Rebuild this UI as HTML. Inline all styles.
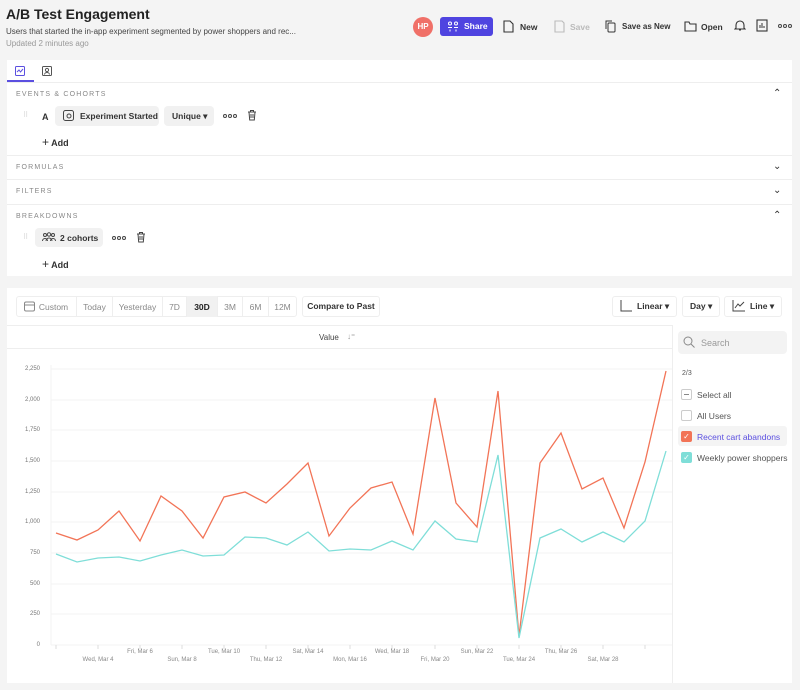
<!DOCTYPE html>
<html><head><meta charset="utf-8"><style>
*{box-sizing:border-box;margin:0;padding:0}
body{width:800px;height:690px;background:#f4f4f4;font-family:"Liberation Sans",sans-serif;color:#222;position:relative;overflow:hidden}
.a{position:absolute;white-space:nowrap}
.t{font-size:9px;color:#333}
.sec{font-size:7px;letter-spacing:1.2px;color:#888}
.hl{position:absolute;left:7px;width:785px;height:1px;background:#eee}
.btn{position:absolute;font-size:8.5px;font-weight:bold;color:#333;white-space:nowrap}
.pill{position:absolute;background:#f1f1f1;border-radius:4px;font-size:8.5px;font-weight:bold;color:#333;display:flex;align-items:center;white-space:nowrap}
.tab{position:absolute;top:296px;height:21px;font-size:8.5px;color:#888;display:flex;align-items:center;justify-content:center;border-right:1px solid #eee}
.ylab{position:absolute;left:0;width:40px;text-align:right;font-size:6px;color:#777}
.xl{position:absolute;font-size:6px;color:#888;white-space:nowrap;transform:translateX(-50%)}
.cb{position:absolute;left:681px;width:11px;height:11px;border:1px solid #ccc;border-radius:2px}
.ll{position:absolute;left:697px;font-size:8.5px;color:#555;white-space:nowrap}
.dots{position:absolute;display:flex;gap:1px}
.dots i{display:block;width:4px;height:4px;border:1px solid #444;border-radius:50%}
</style></head><body>
<div class="a" style="left:6px;top:6px;font-size:14px;font-weight:bold;color:#222">A/B Test Engagement</div>
<div class="a" style="left:6px;top:27px;font-size:8px;color:#444">Users that started the in-app experiment segmented by power shoppers and rec...</div>
<div class="a" style="left:6px;top:39px;font-size:8px;color:#999">Updated 2 minutes ago</div>

<div class="a" style="left:413px;top:17px;width:20px;height:20px;border-radius:50%;background:#f07068;color:#fff;font-size:8px;font-weight:bold;text-align:center;line-height:20px">HP</div>
<div class="a" style="left:440px;top:17px;width:53px;height:19px;border-radius:3px;background:#4f44e0;color:#fff;font-size:8.5px;font-weight:bold;line-height:19px;padding-left:24px">Share</div>
<svg class="a" style="left:447px;top:21px" width="12" height="11"><g fill="none" stroke="#fff" stroke-width="1"><circle cx="3" cy="2.5" r="1.5"/><circle cx="9" cy="2.5" r="1.5"/><path d="M1 6.5h4M7 6.5h4M3 8.5v2M9 8.5v2"/></g></svg>
<svg class="a" style="left:503px;top:20px" width="11" height="13"><path d="M1 1h6l3 3v8H1z" fill="none" stroke="#333" stroke-width="1.1"/></svg>
<div class="btn" style="left:520px;top:22px">New</div>
<svg class="a" style="left:554px;top:20px" width="11" height="13"><path d="M1 1h7l2 2v9H1z" fill="none" stroke="#bbb" stroke-width="1.1"/></svg>
<div class="btn" style="left:570px;top:22px;color:#bbb">Save</div>
<svg class="a" style="left:605px;top:20px" width="11" height="13"><rect x="3" y="3" width="7" height="9" rx="1" fill="none" stroke="#333"/><path d="M1 9V1h6" fill="none" stroke="#333"/></svg>
<div class="btn" style="left:622px;top:22px;font-size:8px">Save as New</div>
<svg class="a" style="left:684px;top:20px" width="13" height="12"><path d="M1 2h4l1 2h6v7H1z" fill="none" stroke="#333" stroke-width="1.1"/></svg>
<div class="btn" style="left:701px;top:22px">Open</div>
<svg class="a" style="left:734px;top:19px" width="12" height="13"><path d="M2 9V6a4 4 0 018 0v3l1 1H1zM5 11h2" fill="none" stroke="#333" stroke-width="1.1"/></svg>
<svg class="a" style="left:756px;top:19px" width="12" height="13"><rect x="1" y="1" width="10" height="11" fill="none" stroke="#333" stroke-width="1.1"/><path d="M4 9V6M6 9V4M8 9V7" stroke="#333"/></svg>
<div class="dots" style="left:778px;top:24px"><i></i><i></i><i></i></div>

<!-- top card -->
<div class="a" style="left:7px;top:60px;width:785px;height:216px;background:#fff"></div>
<div class="a" style="left:7px;top:80px;width:27px;height:2px;background:#5b4fe0"></div>
<svg class="a" style="left:15px;top:66px" width="10" height="10"><rect x=".5" y=".5" width="9" height="9" rx="1" fill="none" stroke="#5b4fe0"/><path d="M2 6l2-2 1.5 2 2.5-3" fill="none" stroke="#5b4fe0"/></svg>
<svg class="a" style="left:42px;top:66px" width="10" height="10"><rect x=".5" y=".5" width="9" height="9" rx="1" fill="none" stroke="#555"/><circle cx="5" cy="4" r="1.6" fill="none" stroke="#555"/><path d="M2.5 8.5a2.5 2 0 015 0" fill="none" stroke="#555"/></svg>
<div class="hl" style="top:82px"></div>
<div class="a sec" style="left:16px;top:91px">EVENTS &amp; COHORTS</div>
<div class="a" style="left:773px;top:88px;font-size:10px;color:#333">⌃</div>
<div class="a" style="left:23px;top:111px;font-size:7px;color:#ccc">⠿</div>
<div class="a t" style="left:42px;top:112px;font-weight:bold">A</div>
<div class="pill" style="left:55px;top:106px;width:104px;height:20px;padding-left:25px">Experiment Started</div>
<svg class="a" style="left:63px;top:110px" width="11" height="11"><rect x=".5" y=".5" width="10" height="10" rx="2" fill="none" stroke="#444"/><circle cx="6" cy="6" r="2" fill="none" stroke="#444"/></svg>
<div class="pill" style="left:164px;top:106px;width:50px;height:20px;padding-left:8px">Unique ▾</div>
<div class="dots" style="left:223px;top:114px"><i></i><i></i><i></i></div>
<svg class="a" style="left:247px;top:109px" width="10" height="12"><path d="M1 3h8M3.5 3V1.5h3V3M2 3l.7 8h4.6L8 3M4 5v4M6 5v4" fill="none" stroke="#444"/></svg>
<div class="a t" style="left:42px;top:135px;font-weight:bold"><span style="font-size:12px;font-weight:normal">+</span> Add</div>
<div class="hl" style="top:155px"></div>
<div class="a sec" style="left:16px;top:164px">FORMULAS</div>
<div class="a" style="left:773px;top:161px;font-size:10px;color:#333">⌄</div>
<div class="hl" style="top:179px"></div>
<div class="a sec" style="left:16px;top:188px">FILTERS</div>
<div class="a" style="left:773px;top:185px;font-size:10px;color:#333">⌄</div>
<div class="hl" style="top:204px"></div>
<div class="a sec" style="left:16px;top:213px">BREAKDOWNS</div>
<div class="a" style="left:773px;top:210px;font-size:10px;color:#333">⌃</div>
<div class="a" style="left:23px;top:233px;font-size:7px;color:#ccc">⠿</div>
<div class="pill" style="left:35px;top:228px;width:68px;height:19px;padding-left:25px">2 cohorts</div>
<svg class="a" style="left:42px;top:232px" width="14" height="10"><g fill="none" stroke="#444"><circle cx="3" cy="3" r="1.5"/><circle cx="7" cy="2.5" r="1.7"/><circle cx="11" cy="3" r="1.5"/><path d="M.5 9a2.5 2.5 0 015 0M4 9a3 3 0 016 0M8.5 9a2.5 2.5 0 015 0"/></g></svg>
<div class="dots" style="left:112px;top:236px"><i></i><i></i><i></i></div>
<svg class="a" style="left:136px;top:231px" width="10" height="12"><path d="M1 3h8M3.5 3V1.5h3V3M2 3l.7 8h4.6L8 3M4 5v4M6 5v4" fill="none" stroke="#444"/></svg>
<div class="a t" style="left:42px;top:257px;font-weight:bold"><span style="font-size:12px;font-weight:normal">+</span> Add</div>

<!-- chart card -->
<div class="a" style="left:7px;top:288px;width:785px;height:395px;background:#fff"></div>
<div class="a" style="left:16px;top:296px;width:281px;height:21px;border:1px solid #eee;border-radius:3px"></div>
<div class="tab" style="left:17px;width:60px;padding-left:14px">Custom</div>
<svg class="a" style="left:24px;top:301px" width="11" height="11"><rect x=".5" y="1" width="10" height="9" rx="1.5" fill="none" stroke="#888"/><path d="M.5 4h10" stroke="#888"/></svg>
<div class="tab" style="left:77px;width:36px">Today</div>
<div class="tab" style="left:113px;width:50px">Yesterday</div>
<div class="tab" style="left:163px;width:24px">7D</div>
<div class="tab" style="left:187px;width:31px;background:#f1f1f1;color:#222;font-weight:bold">30D</div>
<div class="tab" style="left:218px;width:25px">3M</div>
<div class="tab" style="left:243px;width:26px">6M</div>
<div class="tab" style="left:269px;width:27px;border:none">12M</div>
<div class="a" style="left:302px;top:296px;width:78px;height:21px;border:1px solid #eee;border-radius:3px;font-size:8.5px;font-weight:bold;color:#333;text-align:center;line-height:19px">Compare to Past</div>
<div class="a" style="left:612px;top:296px;width:65px;height:21px;border:1px solid #eee;border-radius:3px;font-size:8.5px;font-weight:bold;color:#333;line-height:19px;padding-left:24px">Linear ▾</div>
<svg class="a" style="left:620px;top:300px" width="12" height="12"><path d="M1 0v11h11" fill="none" stroke="#444"/></svg>
<div class="a" style="left:682px;top:296px;width:38px;height:21px;border:1px solid #eee;border-radius:3px;font-size:8.5px;font-weight:bold;color:#333;line-height:19px;padding-left:7px">Day ▾</div>
<div class="a" style="left:724px;top:296px;width:58px;height:21px;border:1px solid #eee;border-radius:3px;font-size:8.5px;font-weight:bold;color:#333;line-height:19px;padding-left:25px">Line ▾</div>
<svg class="a" style="left:732px;top:300px" width="13" height="12"><path d="M1 0v11h12M3 8l3-4 2 2 4-4" fill="none" stroke="#444"/></svg>
<div class="hl" style="top:325px;width:665px"></div>
<div class="a" style="left:672px;top:325px;width:1px;height:358px;background:#eee"></div>
<div class="a" style="left:319px;top:333px;font-size:8px;color:#444">Value</div>
<div class="a" style="left:347px;top:332px;font-size:8px;color:#999">↓⁼</div>
<div class="hl" style="top:348px;width:665px"></div>

<div class="a" style="left:678px;top:331px;width:109px;height:23px;background:#f3f3f3;border-radius:4px"></div>
<svg class="a" style="left:683px;top:336px" width="12" height="12"><circle cx="5" cy="5" r="4" fill="none" stroke="#888"/><path d="M8 8l3.5 3.5" stroke="#888"/></svg>
<div class="a" style="left:701px;top:338px;font-size:9px;color:#999">Search</div>
<div class="a" style="left:682px;top:370px;font-size:7px;color:#555">2/3</div>
<div class="cb" style="top:389px"></div><div class="a" style="left:684px;top:394px;width:5px;height:1px;background:#888"></div>
<div class="ll" style="top:390px">Select all</div>
<div class="cb" style="top:410px"></div>
<div class="ll" style="top:411px">All Users</div>
<div class="a" style="left:678px;top:426px;width:109px;height:20px;background:#f4f4f4;border-radius:3px"></div>
<div class="cb" style="top:431px;background:#f27457;border-color:#f27457;color:#fff;font-size:8px;text-align:center;line-height:9px">✓</div>
<div class="ll" style="top:432px;color:#5b4fe0">Recent cart abandons</div>
<div class="cb" style="top:452px;background:#7fded8;border-color:#7fded8;color:#fff;font-size:8px;text-align:center;line-height:9px">✓</div>
<div class="ll" style="top:453px">Weekly power shoppers</div>

<div class="ylab" style="top:366px">2,250</div>
<div class="ylab" style="top:397px">2,000</div>
<div class="ylab" style="top:427px">1,750</div>
<div class="ylab" style="top:458px">1,500</div>
<div class="ylab" style="top:489px">1,250</div>
<div class="ylab" style="top:519px">1,000</div>
<div class="ylab" style="top:550px">750</div>
<div class="ylab" style="top:581px">500</div>
<div class="ylab" style="top:611px">250</div>
<div class="ylab" style="top:642px">0</div>
<svg class="a" style="left:0;top:0" width="800" height="690">
<g stroke="#f3f3f3" stroke-width="1">
<path d="M51 369H672M51 400H672M51 430H672M51 461H672M51 492H672M51 522H672M51 553H672M51 584H672M51 614H672M51 645H672"/>
<path d="M51 365V645"/>
</g>
<g stroke="#ddd"><path d="M56 645v4M98 645v4M140 645v4M182 645v4M224 645v4M266 645v4M308 645v4M350 645v4M392 645v4M435 645v4M477 645v4M519 645v4M561 645v4M603 645v4M645 645v4"/></g>
<polyline fill="none" stroke="#f27457" stroke-width="1.3" points="56,533 77,540 98,530 119,511 140,541 161,496 182,511 203,538 224,497 245,492 266,503 287,484 308,463 329,536 350,508 371,488 392,482 413,534 435,398 456,503 477,527 498,391 519,636 540,463 561,433 582,489 603,478 624,528 645,462 666,371"/>
<polyline fill="none" stroke="#7fded8" stroke-width="1.3" points="56,554 77,562 98,558 119,557 140,561 161,555 182,550 203,556 224,555 245,537 266,538 287,545 308,532 329,551 350,549 371,550 392,541 413,550 435,521 456,539 477,542 498,455 519,638 540,538 561,529 582,542 603,532 624,542 645,521 666,451"/>
</svg>
<div class="xl" style="left:98px;top:657px">Wed, Mar 4</div>
<div class="xl" style="left:140px;top:649px">Fri, Mar 6</div>
<div class="xl" style="left:182px;top:657px">Sun, Mar 8</div>
<div class="xl" style="left:224px;top:649px">Tue, Mar 10</div>
<div class="xl" style="left:266px;top:657px">Thu, Mar 12</div>
<div class="xl" style="left:308px;top:649px">Sat, Mar 14</div>
<div class="xl" style="left:350px;top:657px">Mon, Mar 16</div>
<div class="xl" style="left:392px;top:649px">Wed, Mar 18</div>
<div class="xl" style="left:435px;top:657px">Fri, Mar 20</div>
<div class="xl" style="left:477px;top:649px">Sun, Mar 22</div>
<div class="xl" style="left:519px;top:657px">Tue, Mar 24</div>
<div class="xl" style="left:561px;top:649px">Thu, Mar 26</div>
<div class="xl" style="left:603px;top:657px">Sat, Mar 28</div>
</body></html>
